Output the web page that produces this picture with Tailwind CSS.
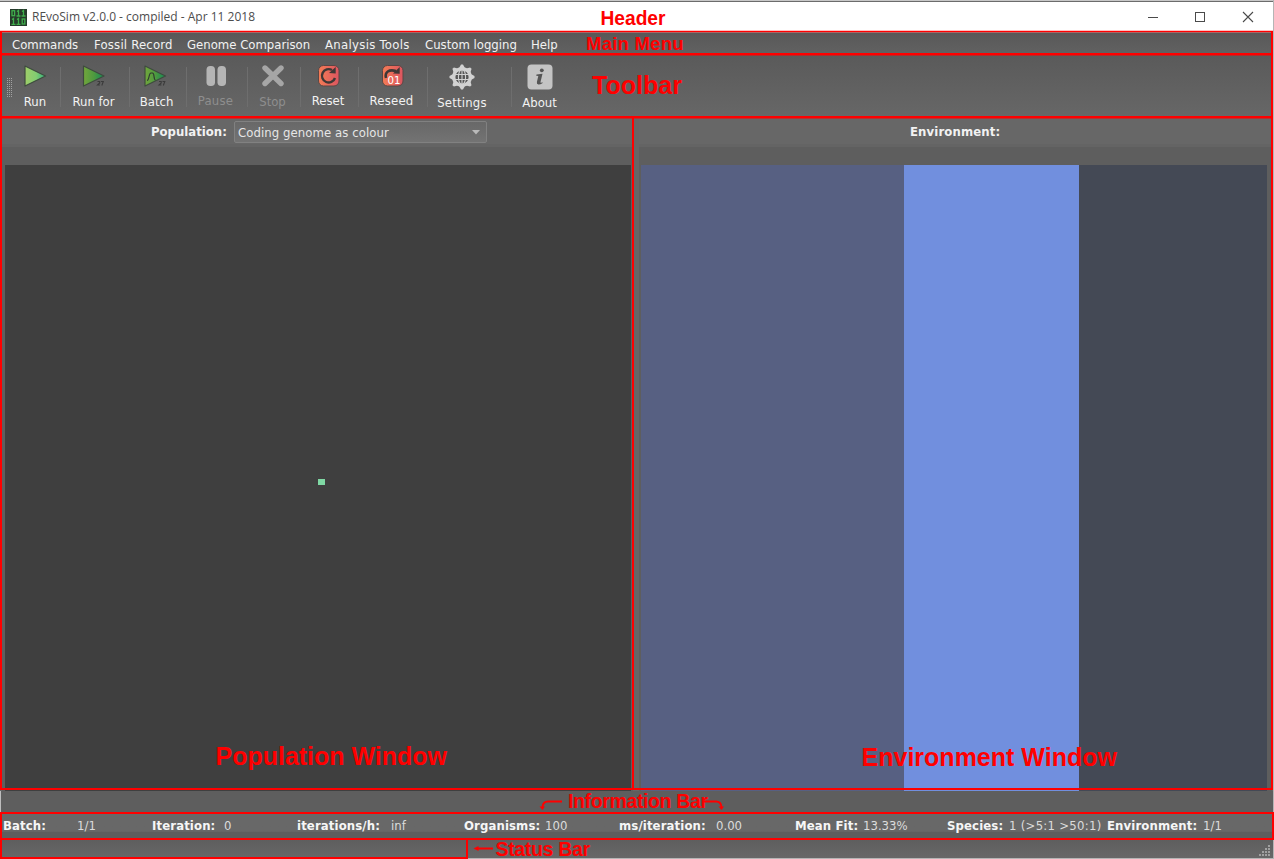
<!DOCTYPE html>
<html lang="en">
<head>
<meta charset="utf-8">
<title>REvoSim v2.0.0</title>
<script src="https://cdn.jsdelivr.net/npm/@tailwindcss/browser@4"></script>
</head>
<body class="w-[1274px] h-[859px] overflow-hidden bg-[#5e5e5e]">
<div class="relative w-[1274px] h-[859px] overflow-hidden flex flex-col font-['DejaVu_Sans_Condensed','DejaVu_Sans',sans-serif] [font-stretch:semi-condensed] text-[13px] leading-4 text-[#f2f2f2] whitespace-nowrap">
  <!-- title bar -->
  <header class="h-[31px] shrink-0 bg-white border-t border-[#c8c8c8] flex items-center relative">
    <div class="absolute inset-x-0 top-0 h-px bg-[#6c6c6c]"></div>
    <svg class="ml-[10px] mt-[2px] w-[17px] h-[17px] shrink-0" viewBox="0 0 17 17"><rect width="17" height="17" fill="#263a2b"/><g fill="none" stroke="#3fae4c" stroke-width="1.3"><rect x="2" y="1.7" width="2.6" height="5"/><path d="M7 2.5L8.5 1.5V7M6.5 7h4M12 2.5l1.5-1V7M11.5 7h4M2 10.5l1.5-1V15M1.5 15.3h4M7 10.5l1.5-1V15M6.5 15.3h4"/><rect x="12.2" y="10" width="2.6" height="5"/></g></svg>
    <span class="ml-[5px] mt-[2px] font-['Open_Sans','Noto_Sans',sans-serif] [font-stretch:normal] text-[12px] text-[#4d4d4d] w-[1116px]">REvoSim v2.0.0 - compiled - Apr 11 2018</span>
    <svg class="w-[106px] h-[12px] mt-[1px] shrink-0" viewBox="0 0 106 12" fill="none" stroke="#4a4a4a"><path d="M0 6.5h10"/><rect x="47.5" y="1.5" width="9" height="9"/><path d="M95 1l10 10M105 1L95 11" stroke-width="1.1"/></svg>
  </header>
  <!-- menu bar -->
  <nav class="h-[23px] shrink-0 mt-[1px] bg-linear-to-b from-[#585858] to-[#626262] border-t border-[#8a8a8a] flex items-center pl-[12px] pt-[1px]">
    <span class="w-[82px]">Commands</span><span class="w-[93px] tracking-[0.2px]">Fossil Record</span><span class="w-[138px]">Genome Comparison</span><span class="w-[100px] tracking-[0.3px]">Analysis Tools</span><span class="w-[106px]">Custom logging</span><span>Help</span>
  </nav>
  <!-- toolbar -->
  <div class="h-[62px] shrink-0 bg-linear-to-b from-[#5a5a5a] to-[#676767] flex items-start text-center">
    <svg class="w-[6px] h-[19px] mt-[23px] ml-[7px] -mr-[3px] shrink-0" viewBox="0 0 6 19" fill="none" stroke="#a2a2a2" stroke-dasharray="1 1"><path d="M.5 0v19M2.5 0v19M4.5 0v19"/></svg>
    <div class="w-[50px] h-full flex flex-col items-center pt-[10px] shrink-0">
      <svg class="w-[24px] h-[24px]" viewBox="0 0 24 24"><defs><linearGradient id="ga"><stop stop-color="#9fce68"/><stop offset=".55" stop-color="#82cc72"/><stop offset="1" stop-color="#2fae7c"/></linearGradient><linearGradient id="gb"><stop stop-color="#72a63c"/><stop offset=".5" stop-color="#4f9a3f"/><stop offset="1" stop-color="#128a57"/></linearGradient><linearGradient id="gr"><stop stop-color="#f47c55"/><stop offset="1" stop-color="#dc5560"/></linearGradient></defs><path d="M2 1L22.500 11L2 21Z" fill="url(#ga)" stroke="#3e4b3e" stroke-width="1.2" stroke-linejoin="round"/></svg>
      <span class="mt-[5px]">Run</span>
    </div>
    <div class="w-px h-[40px] mt-[12px] bg-[#6e6e6e] shrink-0"></div>
    <div class="w-[68px] pr-[3px] h-full flex flex-col items-center pt-[10px] shrink-0">
      <svg class="w-[24px] h-[24px]" viewBox="0 0 24 24"><path d="M1.500 1L22 11L1.500 21Z" fill="url(#gb)" stroke="#3e4b3e" stroke-width="1.2" stroke-linejoin="round"/><path d="M15.500 16.500h2.200v1.400L15.500 20h2.400M19 16.500h2.300l-1.500 4" fill="none" stroke="#3b3b3b" stroke-width="1.100"/></svg>
      <span class="mt-[5px]">Run for</span>
    </div>
    <div class="w-px h-[40px] mt-[12px] bg-[#6e6e6e] shrink-0"></div>
    <div class="w-[56px] pr-[3px] h-full flex flex-col items-center pt-[10px] shrink-0">
      <svg class="w-[24px] h-[24px] mr-[3px]" viewBox="0 0 24 24"><path d="M2 1L22.500 11L2 21Z" fill="url(#gb)" stroke="#3e4b3e" stroke-width="1.200" stroke-linejoin="round"/><path d="M4 15.500C6.500 15.500 5.500 8 8 8H9.500c2.300 0 .800 7 3 7" fill="none" stroke="#2f3b2f" stroke-width="1.200"/><path d="M16 16.500h2.200v1.400L16 20h2.400M19.500 16.500h2.300l-1.500 4" fill="none" stroke="#3b3b3b" stroke-width="1.100"/></svg>
      <span class="mt-[5px]">Batch</span>
    </div>
    <div class="w-px h-[40px] mt-[12px] bg-[#6e6e6e] shrink-0"></div>
    <div class="w-[60px] pr-[3px] h-full flex flex-col items-center pt-[10px] shrink-0 text-[#8e8e8e]">
      <svg class="w-[24px] h-[24px]" viewBox="0 0 24 24" fill="#b5b5b5"><rect x="2.500" y="1" width="8.500" height="20" rx="3.800"/><rect x="13.500" y="1" width="8.500" height="20" rx="3.800"/></svg>
      <span class="mt-[4px] tracking-[0.2px]">Pause</span>
    </div>
    <div class="w-px h-[40px] mt-[12px] bg-[#6e6e6e] shrink-0"></div>
    <div class="w-[52px] pr-[3px] h-full flex flex-col items-center pt-[10px] shrink-0 text-[#8e8e8e]">
      <svg class="w-[24px] h-[24px]" viewBox="0 0 24 24"><path d="M4 3L20 18.500M20 3L4 18.500" stroke="#a6a6a6" stroke-width="5.400" stroke-linecap="round"/></svg>
      <span class="mt-[5px]">Stop</span>
    </div>
    <div class="w-px h-[40px] mt-[12px] bg-[#6e6e6e] shrink-0"></div>
    <div class="w-[57px] pr-[3px] h-full flex flex-col items-center pt-[10px] shrink-0">
      <svg class="w-[24px] h-[24px]" viewBox="0 0 24 24"><rect x="2.500" y=".5" width="20.500" height="20.500" rx="5" fill="url(#gr)" stroke="#5a4745"/><path d="M16 5A6.700 6.700 0 1 0 19 13" fill="none" stroke="#3f3836" stroke-width="2.400"/><path d="M13 8L19.700 2V8.500Z" fill="#3f3836"/></svg>
      <span class="mt-[4px]">Reset</span>
    </div>
    <div class="w-px h-[40px] mt-[12px] bg-[#6e6e6e] shrink-0"></div>
    <div class="w-[68px] pr-[3px] h-full flex flex-col items-center pt-[10px] shrink-0">
      <svg class="w-[24px] h-[24px]" viewBox="0 0 24 24"><rect x="2.500" y=".5" width="20.500" height="20.500" rx="5" fill="url(#gr)" stroke="#5a4745"/><path d="M6 13C4.500 7 9 4 16 6" fill="none" stroke="#3f3836" stroke-width="2.600"/><path d="M13 8.500L19.700 2V8.700Z" fill="#3f3836"/><text x="7.500" y="18.500" font-size="10.500" textLength="13" lengthAdjust="spacingAndGlyphs" fill="#fff" font-family="DejaVu Sans">01</text></svg>
      <span class="mt-[4px] tracking-[0.2px]">Reseed</span>
    </div>
    <div class="w-px h-[40px] mt-[12px] bg-[#6e6e6e] shrink-0"></div>
    <div class="w-[83px] pr-[15px] h-full flex flex-col items-center pt-[9px] shrink-0">
      <svg class="w-[26px] h-[26px]" viewBox="0 0 26 26"><g fill="#d2d2d2"><circle cx="13" cy="13" r="10"/><path id="tp" d="M9.500 5L12 .5h2L16.500 5Z"/><use href="#tp" transform="rotate(45 13 13)"/><use href="#tp" transform="rotate(90 13 13)"/><use href="#tp" transform="rotate(135 13 13)"/><use href="#tp" transform="rotate(180 13 13)"/><use href="#tp" transform="rotate(225 13 13)"/><use href="#tp" transform="rotate(270 13 13)"/><use href="#tp" transform="rotate(315 13 13)"/></g><circle cx="13" cy="13" r="6.600" fill="#565656"/><g fill="none" stroke="#d2d2d2" stroke-width="1.100"><path d="M13 6v14M6 10.500h14M6 15.500h14"/><ellipse cx="13" cy="13" rx="3.600" ry="7.500"/></g></svg>
      <span class="mt-[5px] tracking-[0.2px]">Settings</span>
    </div>
    <div class="w-px h-[40px] mt-[12px] bg-[#6e6e6e] shrink-0"></div>
    <div class="w-[55px] h-full flex flex-col items-center pt-[9px] shrink-0">
      <svg class="w-[26px] h-[26px]" viewBox="0 0 26 26"><rect x=".5" y=".5" width="25" height="25" rx="4" fill="#c4c4c4"/><g fill="#555"><circle cx="14.800" cy="6.300" r="1.900"/><path d="M9.500 10.500l6-.8-2 8.300q-.2 1 .6.800l1.600-.6-.3 1q-2.200 1.500-4 1.300-2-.4-1.500-2.600l1.400-5.800-2.100-.4z"/></g></svg>
      <span class="mt-[5px]">About</span>
    </div>
  </div>
  <!-- panels -->
  <main class="h-[674px] shrink-0 flex bg-[#666]">
    <section class="w-[631px] ml-[2px] shrink-0 flex flex-col bg-[#5e5e5e]">
      <div class="h-[30px] bg-[#676767] border-b-[3px] border-[#646464] shrink-0 flex items-center">
        <b class="ml-[149px] w-[83px] mt-[3px]">Population:</b>
        <div class="w-[253px] h-[22px] mt-[3px] rounded-[2px] border border-[#818181] bg-linear-to-b from-[#686868] to-[#737373] flex items-center justify-between pl-[3px] pr-[6px] text-[#e6e6e6]"><span class="mt-[2px] tracking-[0.07px]">Coding genome as colour</span><svg class="w-[8px] h-[5px]" viewBox="0 0 8 5"><path d="M0 0h8L4 4.500Z" fill="#b9b9b9"/></svg></div>
      </div>
      <div class="ml-[3px] mt-[18px] w-[626px] h-[626px] bg-[#3f3f3f] flex items-start shrink-0"><div class="ml-[313px] mt-[314px] w-[7px] h-[6px] bg-[#7fd8a4]"></div></div>
    </section>
    <section class="w-[633px] ml-[6px] shrink-0 flex flex-col bg-[#5e5e5e]">
      <div class="h-[30px] bg-[#676767] border-b-[3px] border-[#646464] shrink-0 flex items-center">
        <b class="ml-[271px] mt-[3px] tracking-[0.12px]">Environment:</b>
      </div>
      <div class="ml-[2px] mt-[18px] w-[626px] h-[626px] flex shrink-0"><div class="w-[262.500px] bg-[#576082]"></div><div class="w-[175.500px] bg-[#718fde]"></div><div class="flex-1 bg-[#444955]"></div></div>
    </section>
  </main>
  <div class="h-[22px] shrink-0 bg-[#5e5e5e] border-l border-[#bdbdbd]"></div>
  <!-- information bar -->
  <div class="h-[26px] shrink-0 bg-linear-to-b from-[#686868] from-70% to-[#5e5e5e] to-75% flex items-center pl-[3px] pb-[1px] text-[#dcdcdc] [&_b]:text-[#f6f6f6] [&_b]:tracking-[0.12px]">
    <b class="w-[74px]">Batch:</b><span class="w-[75px]">1/1</span>
    <b class="w-[72px]">Iteration:</b><span class="w-[73px]">0</span>
    <b class="w-[94px]">iterations/h:</b><span class="w-[73px]">inf</span>
    <b class="w-[81px]">Organisms:</b><span class="w-[74px]">100</span>
    <b class="w-[97px]">ms/iteration:</b><span class="w-[79px]">0.00</span>
    <b class="w-[68px]">Mean Fit:</b><span class="w-[84px]">13.33%</span>
    <b class="w-[62px]">Species:</b><span class="w-[98px] tracking-[0.28px]">1 (&gt;5:1 &gt;50:1)</span>
    <b class="w-[96px]">Environment:</b><span>1/1</span>
  </div>
  <!-- status bar -->
  <footer class="flex-1 bg-linear-to-b from-[#5e5e5e] to-[#676767] border-b border-[#b5b5b5] flex justify-end items-end pr-[3px] pb-[1px]">
    <svg class="w-[12px] h-[12px]" viewBox="0 0 12 12" fill="#a0a0a0"><path d="M9 0h2v2h-2zM6 3h2v2h-2zM9 3h2v2h-2zM3 6h2v2h-2zM6 6h2v2h-2zM9 6h2v2h-2zM0 9h2v2h-2zM3 9h2v2h-2zM6 9h2v2h-2zM9 9h2v2h-2z"/></svg>
  </footer>

  <!-- annotation layer -->
  <div class="absolute right-0 top-0 w-px h-full bg-[#b5b5b5]"></div>
  <svg class="absolute inset-0 w-[1274px] h-[859px]" viewBox="0 0 1274 859" fill="none" stroke="#f00" stroke-width="2">
    <path d="M0 31.500H1273" stroke-width="1.500"/>
    <path d="M0 54.300H1273M0 117.300H1273" stroke-width="2.600"/>
    <path d="M1 31V790M1272 31V790M633 117V790M0 789H1273"/>
    <path d="M1 813H1273V839H1ZM1 839V858H467V839"/>
    <path d="M562 801.500H548Q543 801.500 542.500 807M703 801.500H716Q721 801.500 721.500 807M493 848.500H477" stroke-width="1.800"/>
    <path d="M539.500 806.500h5.500l-2.500 3.500zM718.500 806.500h5.500l-2.500 3.500zM473.500 848.500l5-2.500v5z" fill="#f00" stroke="none"/>
    <g fill="#f00" stroke="none" font-family="Liberation Sans, Arial, sans-serif" font-weight="700">
      <text x="600.500" y="25" font-size="19.500" textLength="65" lengthAdjust="spacingAndGlyphs">Header</text>
      <text x="586" y="50" font-size="18.500" textLength="97.500">Main Menu</text>
      <text x="592" y="94" font-size="25" textLength="90">Toolbar</text>
      <text x="215.500" y="765" font-size="25" textLength="231.500">Population Window</text>
      <text x="861.500" y="766" font-size="25" textLength="255.500">Environment Window</text>
      <text x="568" y="808" font-size="19.500" textLength="140">Information Bar</text>
      <text x="495.500" y="856" font-size="19.500" textLength="94.500">Status Bar</text>
    </g>
  </svg>
</div>
</body>
</html>
